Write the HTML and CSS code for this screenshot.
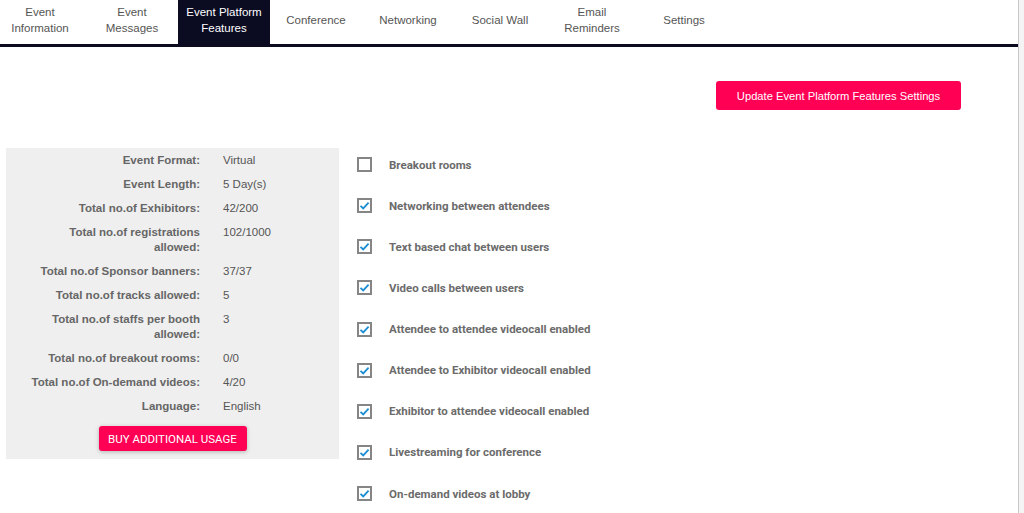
FILE: index.html
```html
<!DOCTYPE html>
<html lang="en">
<head>
  <meta charset="UTF-8">
  <meta name="viewport" content="width=device-width, initial-scale=1.0">
  <title>Event Platform Features</title>
  <link rel="stylesheet" href="styles.css">
</head>
<body>

  <div class="page">
    <nav class="tabs">
      <a class="tab">Event<br>Information</a>
      <a class="tab">Event<br>Messages</a>
      <a class="tab active">Event Platform<br>Features</a>
      <a class="tab">Conference</a>
      <a class="tab">Networking</a>
      <a class="tab">Social Wall</a>
      <a class="tab">Email<br>Reminders</a>
      <a class="tab">Settings</a>
    </nav>

    <div class="toolbar">
      <button class="btn-update">Update Event Platform Features Settings</button>
    </div>

    <div class="content">
      <div class="usage">
        <div class="usage-grid">
          <div class="label">Event Format:</div><div class="value">Virtual</div>
          <div class="label">Event Length:</div><div class="value">5 Day(s)</div>
          <div class="label">Total no.of Exhibitors:</div><div class="value">42/200</div>
          <div class="label">Total no.of registrations allowed:</div><div class="value">102/1000</div>
          <div class="label">Total no.of Sponsor banners:</div><div class="value">37/37</div>
          <div class="label">Total no.of tracks allowed:</div><div class="value">5</div>
          <div class="label">Total no.of staffs per booth allowed:</div><div class="value">3</div>
          <div class="label">Total no.of breakout rooms:</div><div class="value">0/0</div>
          <div class="label">Total no.of On-demand videos:</div><div class="value">4/20</div>
          <div class="label">Language:</div><div class="value">English</div>
        </div>
        <button class="btn-buy">BUY ADDITIONAL USAGE</button>
      </div>

      <ul class="features">
        <li><span class="check"></span>Breakout rooms</li>
        <li><span class="check on"></span>Networking between attendees</li>
        <li><span class="check on"></span>Text based chat between users</li>
        <li><span class="check on"></span>Video calls between users</li>
        <li><span class="check on"></span>Attendee to attendee videocall enabled</li>
        <li><span class="check on"></span>Attendee to Exhibitor videocall enabled</li>
        <li><span class="check on"></span>Exhibitor to attendee videocall enabled</li>
        <li><span class="check on"></span>Livestreaming for conference</li>
        <li><span class="check on"></span>On-demand videos at lobby</li>
      </ul>
    </div>
  </div>

  <script>
    // draw the tick inside every checked box
    document.querySelectorAll('.check.on').forEach(function (box) {
      box.innerHTML = '<svg viewBox="0 0 11 11" width="11" height="11"><path d="M1.5 5.8 L4.2 8.4 L9.6 2.6" fill="none" stroke="#1b8ed3" stroke-width="1.8"/></svg>';
    });
  </script>

</body>
</html>
```

FILE: styles.css
```css
* {
  box-sizing: border-box;
  margin: 0;
  padding: 0;
}

body {
  font-family: 'Liberation Sans', Arial, sans-serif;
  background-color: #f4f4f4;
  color: #555;
  overflow: hidden;
}

.page {
  width: 1019px;
  min-height: 100vh;
  background: #fff;
  border-right: 1px solid #c8c8c8;
}

.tabs {
  display: flex;
  margin-left: -6px;
  border-bottom: 3px solid #0b0b22;
}

.tab {
  width: 92px;
  height: 44px;
  padding: 4px 0 8px;
  display: flex;
  align-items: center;
  justify-content: center;
  text-align: center;
  font-size: 11.5px;
  line-height: 16px;
  color: #555;
  text-decoration: none;
}

.tab.active {
  background-color: #0b0b22;
  color: #fff;
}

.toolbar {
  display: flex;
  justify-content: flex-end;
  padding: 34px 57px 0 0;
}

button {
  border: none;
  color: #fff;
  font-family: 'Liberation Sans', Arial, sans-serif;
  background-color: #ff0055;
  cursor: pointer;
}

.btn-update {
  width: 245px;
  height: 29px;
  border-radius: 3px;
  font-size: 11.2px;
}

.content {
  display: flex;
  align-items: flex-start;
  gap: 18px;
  margin-top: 38px;
}

.usage {
  margin-left: 6px;
  width: 333px;
  background: #efefef;
  padding: 5px 0 8px 19px;
  display: flex;
  flex-direction: column;
  align-items: center;
}

.usage-grid {
  width: 100%;
  display: grid;
  grid-template-columns: 175px 1fr;
  column-gap: 23px;
  row-gap: 9px;
  font-size: 11.5px;
  line-height: 15px;
}

.label {
  text-align: right;
  font-weight: bold;
  color: #666;
}

.value {
  color: #555;
}

.btn-buy {
  margin: 12px 0 0 -19px;
  width: 148px;
  height: 25px;
  border-radius: 3px;
  font-family: Roboto, 'Liberation Sans', sans-serif;
  font-size: 11.5px;
  box-shadow: 0 1px 4px rgba(0, 0, 0, 0.25);
}

.features {
  list-style: none;
  padding-top: 9px;
}

.features li {
  display: flex;
  align-items: center;
  height: 15px;
  margin-bottom: 26.125px;
  font-family: Roboto, 'Liberation Sans', sans-serif;
  font-weight: bold;
  font-size: 11.5px;
  color: #6b6b6b;
}

.check {
  width: 15px;
  height: 15px;
  border: 2px solid #858585;
  margin-right: 17px;
  display: flex;
  align-items: center;
  justify-content: center;
  background: #fff;
}
```
